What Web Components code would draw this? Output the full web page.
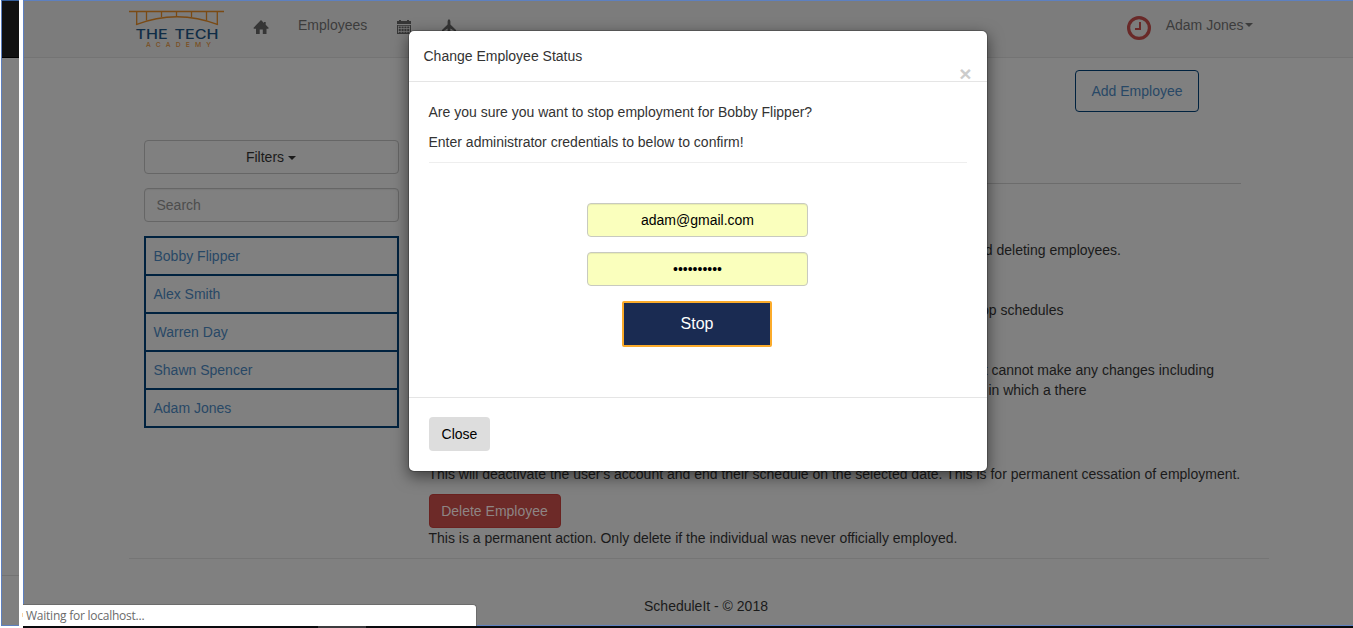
<!DOCTYPE html>
<html lang="en">
<head>
<meta charset="utf-8">
<title>ScheduleIt</title>
<style>
html,body{margin:0;height:628px;overflow:hidden;background:#fff}
body{font:14px/20px "Liberation Sans",Arial,sans-serif;color:#1a1a1a}
</style>
</head>
<body>
<schedule-app></schedule-app>
<script>
function define(name, html){
  const t = document.createElement('template');
  t.innerHTML = html;
  customElements.define(name, class extends HTMLElement{
    constructor(){ super(); this.attachShadow({mode:'open'}).append(t.content.cloneNode(true)); }
  });
}

define('window-edge', `<style>
:host{display:flex;flex-direction:column;box-sizing:border-box;width:18px;height:626px;margin-left:1px;background:#808080;border-left:1px solid #5d80c0;border-bottom:1px solid #5d80c0;border-top:1px solid #345e9c}
.bar{height:56px;background:#111;border-bottom:1px solid #000}
.line{height:1px;background:#737373;margin-top:517px}
</style><div class="bar"></div><div class="line"></div>`);

define('academy-logo', `<style>:host{display:block;width:96px;height:40px}svg{display:block}</style>
<svg width="96" height="40" viewBox="129 9 96 40">
<g fill="none" stroke="#7a4a14" stroke-width="1.300">
<path d="M129 11.500H224" stroke-width="1.600"/><path d="M136.700 12V24.500M146.500 12V20.500M161.500 12V17M176.500 12V16M191.500 12V17M206.500 12V20.500M217.300 12V24.500"/>
<path d="M136 24.600Q177 8.800 218 24.600" stroke-width="1.500"/></g>
<text x="135.500" y="38.500" font-family="Inter,sans-serif" font-size="12.500" font-weight="500" fill="#102d46" word-spacing="2" textLength="83" lengthAdjust="spacingAndGlyphs">THE TECH</text>
<text x="146" y="46.800" font-family="Inter,sans-serif" font-size="6.800" font-weight="500" fill="#7a4e1c" textLength="65">ACADEMY</text>
</svg>`);

define('nav-bar', `<style>
:host{display:flex;box-sizing:border-box;height:57px;background:#7c7c7c;border-bottom:1px solid #747474;color:#3c3c3c;padding:8px 100.500px 0 105px;align-items:flex-start}
svg{display:block}
.home{margin:10px 0 0 28px}.emp{margin:6px 0 0 29px;width:69px}.cal{margin:11px 0 0 29.500px}.plane{margin:10px 0 0 31px}
.clock{margin:7px 0 0 auto}.user{display:flex;align-items:center;margin:6px 0 0 15px}
i{border:4px solid transparent;border-top-color:#3c3c3c;border-bottom:0;margin-left:1px}
</style>
<academy-logo></academy-logo>
<svg class="home" width="16" height="16" viewBox="0 0 16 16"><path fill="#363636" d="M8 1 11 4V3H12.700V5.700L15.800 9 15.200 9.700H13.500V15H9.800V10.500H6.700V15H3V9.700H1L.400 9Z"/></svg>
<span class="emp">Employees</span>
<svg class="cal" width="14" height="15" viewBox="0 0 14 15"><path fill="#363636" d="M0 1H2V0H4V1H10V0H12V1H14V4H0ZM0 5H14V14H0Z"/><path stroke="#7c7c7c" stroke-width=".7" d="M1 8.500H13M1 11.500H13M1.500 6V13M4.200 6V13M7 6V13M9.800 6V13M12.500 6V13M1 6.200H13"/></svg>
<svg class="plane" width="14" height="15" viewBox="0 0 14 15"><path fill="#363636" d="M7 0Q8.400 1 8.400 2.500V5.600L14 11V13L8.400 9.500V13L10 15H4L5.600 13V9.500L0 13V11L5.600 5.600V2.500Q5.600 1 7 0Z"/></svg>
<svg class="clock" width="24" height="24" viewBox="0 0 24 24" fill="none" stroke="#692928"><circle cx="12" cy="12" r="10.400" stroke-width="3.200"/><path stroke-width="2" d="M13 6V13H8"/></svg>
<span class="user">Adam Jones<i></i></span>`);

define('side-button', `<style>
:host{display:flex;box-sizing:border-box;height:34px;border:1px solid #666;border-radius:4px;align-items:center;justify-content:center;color:#1a1a1a;padding-right:1px}
:host([kind=search]){justify-content:flex-start;padding-left:11.500px;color:#4d4d4d;box-shadow:inset 0 1px 1px rgba(0,0,0,.06)}
i{border:4px solid transparent;border-top-color:#1a1a1a;border-bottom:0;margin-left:4px;margin-top:1px}
:host([kind=search]) i{display:none}
</style><slot></slot><i></i>`);

define('employee-row', `<style>
:host{display:block;box-sizing:border-box;height:40px;margin-bottom:-2px;border:2px solid #00223f;padding:8px 8px 8px 7.500px;color:#284866}
</style><slot></slot>`);

define('employee-sidebar', `<style>
:host{display:flex;flex-direction:column;gap:14px;width:255px;padding-top:82px}
</style>
<side-button>Filters</side-button><side-button kind="search">Search</side-button>
<div><employee-row>Bobby Flipper</employee-row><employee-row>Alex Smith</employee-row><employee-row>Warren Day</employee-row><employee-row>Shawn Spencer</employee-row><employee-row>Adam Jones</employee-row></div>`);

define('employee-details', `<style>
:host{display:block;width:812px;white-space:nowrap}
.top{display:flex;justify-content:flex-end;padding:12px 42px 0 0}
.add{box-sizing:border-box;width:124px;height:42px;border:1px solid #00223f;border-radius:4px;color:#284866;text-align:center;line-height:40px}
hr{border:0;height:1px;background:#6c6c6c;margin:71px 0 56px}
.r{text-align:right}
.t{margin-left:-.5px}
.del{box-sizing:border-box;width:132px;height:34px;border:1px solid #6a2220;border-radius:4px;background:#6d2a28;color:#8e8584;text-align:center;line-height:32px;margin-top:10px;padding-right:1px}
</style>
<div class="top"><div class="add">Add Employee</div></div><hr>
<div class="r" style="padding-right:120px">d deleting employees.</div>
<div class="r" style="padding-right:177.500px;margin-top:40px">op schedules</div>
<div class="r" style="padding-right:27px;margin-top:40px">t cannot make any changes including</div>
<div class="r" style="padding-right:154.500px">in which a there</div>
<div class="t" style="margin-top:64px">This will deactivate the user's account and end their schedule on the selected date. This is for permanent cessation of employment.</div>
<div class="del">Delete Employee</div>
<div class="t">This is a permanent action. Only delete if the individual was never officially employed.</div>`);

define('main-page', `<style>
:host{display:block;box-sizing:border-box;width:1330px;height:626px;background:#808080;border:solid #5d80c0;border-width:1px 0 1px 1px}
.body{display:flex;gap:30px;height:500px;padding-left:120px}
footer{margin:0 84px 0 105px;border-top:1px solid #757575;padding:37px 0 0 14px;text-align:center;height:20px}
</style>
<nav-bar></nav-bar>
<div class="body"><employee-sidebar></employee-sidebar><employee-details></employee-details></div>
<footer>ScheduleIt - © 2018</footer>`);

define('form-field', `<style>
:host{display:block;box-sizing:border-box;width:221px;height:34px;border:1px solid #c8cac0;border-radius:4px;background:#faffbd;color:#000;text-align:center;line-height:32px;box-shadow:inset 0 1px 1px rgba(0,0,0,.075)}
</style><slot></slot>`);

define('status-dialog', `<style>
:host{display:block;box-sizing:border-box;position:absolute;left:408px;top:30px;width:580px;height:442px;background:#fff;background-clip:padding-box;border:1px solid rgba(0,0,0,.2);border-radius:6px;box-shadow:0 5px 15px rgba(0,0,0,.5);color:#333}
header{display:flex;justify-content:space-between;box-sizing:border-box;height:51px;border-bottom:1px solid #e5e5e5;padding:15px 15.500px 0 14.500px}
.x{font-size:21px;font-weight:700;line-height:21px;color:#ccc;margin-top:17px}
main{display:flex;flex-direction:column;height:315px;padding:20px 20px 0;box-sizing:border-box}
p{margin:0 0 10px -.5px}
hr{width:100%;border:0;height:1px;background:#eee;margin:0 0 40px}
form-field{margin:0 0 15px 158px}
.stop{box-sizing:border-box;width:150px;height:46px;border:2px solid #fbab2b;border-radius:2px;background:#1a2b52;color:#fff;font-size:16px;line-height:41px;text-align:center;margin-left:193px}
footer{border-top:1px solid #e5e5e5;padding:19px 20px}
.close{width:61px;height:34px;line-height:34px;border-radius:4px;background:#ddd;color:#000;text-align:center}
</style>
<header><span>Change Employee Status</span><span class="x">×</span></header>
<main><p>Are you sure you want to stop employment for Bobby Flipper?</p><p>Enter administrator credentials to below to confirm!</p><hr>
<form-field>adam@gmail.com</form-field><form-field>••••••••••</form-field><div class="stop">Stop</div></main>
<footer><div class="close">Close</div></footer>`);

define('status-bubble', `<style>
:host{display:block;box-sizing:border-box;position:absolute;left:20px;top:604px;width:457px;height:22px;background:#fff;border:solid #6c6c6c;border-width:1px 1px 0 0;border-radius:0 4px 0 0;padding-left:6px;font:12px/22px "Open Sans",sans-serif;letter-spacing:-.24px;color:#6b6b6b}
:host::before{content:"";position:absolute;left:-1px;top:-1px;width:4px;height:1px;background:#fff}
:host::after{content:"";position:absolute;left:2px;top:8px;width:1px;height:4px;background:#f8d3a5}
</style><slot></slot>`);

define('schedule-app', `<style>
:host{display:flex;flex-direction:column;position:relative;width:1353px;height:628px}
.row{display:flex;gap:4px;height:626px}
.task{display:flex;height:2px;margin-left:23px;background:#0a0b0e}
.task i{width:48px;margin-left:295px;background:#3c3b3e}
</style>
<div class="row"><window-edge></window-edge><main-page></main-page></div>
<div class="task"><i></i></div>
<status-dialog></status-dialog>
<status-bubble>Waiting for localhost...</status-bubble>`);
</script>
</body>
</html>
